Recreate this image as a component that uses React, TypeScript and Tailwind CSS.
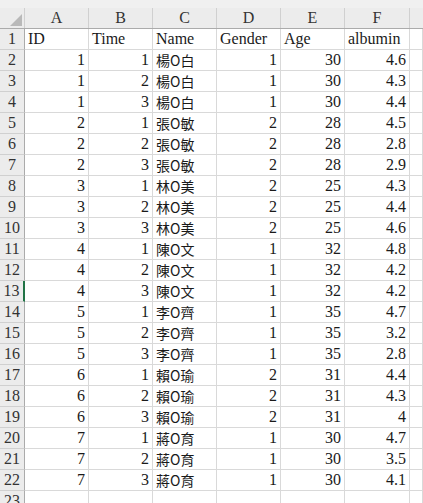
import React from 'react';

type Row = [number, number, string, number, number, number];

const rows: Row[] = [
  [1, 1, '楊O白', 1, 30, 4.6],
  [1, 2, '楊O白', 1, 30, 4.3],
  [1, 3, '楊O白', 1, 30, 4.4],
  [2, 1, '張O敏', 2, 28, 4.5],
  [2, 2, '張O敏', 2, 28, 2.8],
  [2, 3, '張O敏', 2, 28, 2.9],
  [3, 1, '林O美', 2, 25, 4.3],
  [3, 2, '林O美', 2, 25, 4.4],
  [3, 3, '林O美', 2, 25, 4.6],
  [4, 1, '陳O文', 1, 32, 4.8],
  [4, 2, '陳O文', 1, 32, 4.2],
  [4, 3, '陳O文', 1, 32, 4.2],
  [5, 1, '李O齊', 1, 35, 4.7],
  [5, 2, '李O齊', 1, 35, 3.2],
  [5, 3, '李O齊', 1, 35, 2.8],
  [6, 1, '賴O瑜', 2, 31, 4.4],
  [6, 2, '賴O瑜', 2, 31, 4.3],
  [6, 3, '賴O瑜', 2, 31, 4],
  [7, 1, '蔣O育', 1, 30, 4.7],
  [7, 2, '蔣O育', 1, 30, 3.5],
  [7, 3, '蔣O育', 1, 30, 4.1],
];

const cols = ['A', 'B', 'C', 'D', 'E', 'F'];
const grid = 'grid grid-cols-[25px_64px_64px_64px_64px_64px_65px_1fr]';
const serif = "font-['Liberation_Serif','Noto_Sans_CJK_TC',serif]";
const cjk = "font-['Noto_Sans_CJK_TC','Liberation_Sans',sans-serif]";

function RowHead({ n, active }: { n: number | string; active?: boolean }) {
  return (
    <div
      className={`h-[21px] flex items-center justify-center bg-[#ececec] border-b border-[#d0d0d0] border-r ${
        active ? 'border-r-[#217346] border-r-2' : 'border-r-[#ababab]'
      } text-[16px] leading-[20px] text-[#333]`}
    >
      {n}
    </div>
  );
}

function Cell({ children, right, cn }: { children?: React.ReactNode; right?: boolean; cn?: boolean }) {
  return (
    <div
      className={`h-[21px] flex items-center px-[3px] border-r border-b border-[#d9d9d9] bg-white text-[#1a1a1a] leading-[20px] whitespace-nowrap overflow-hidden ${
        right ? 'justify-end' : 'justify-start'
      } ${cn ? cjk + ' text-[14px]' : 'text-[16px]'}`}
    >
      {children}
    </div>
  );
}

export default function App() {
  return (
    <div className={`w-[423px] h-[503px] overflow-hidden bg-white ${serif}`}>
      <div className="h-[8px] bg-[#f0f0f0]" />
      {/* column headers */}
      <div className={`${grid} bg-[#ececec] border-b border-[#ababab]`}>
        <div className="h-[20px] relative border-r border-[#d0d0d0]">
          <div className="absolute right-[2px] bottom-[2px] w-0 h-0 border-l-[12px] border-l-transparent border-b-[12px] border-b-[#b9b9b9]" />
        </div>
        {cols.map((c) => (
          <div key={c} className="h-[20px] flex items-center justify-center border-r border-[#d0d0d0] text-[16px] leading-[20px] text-[#333]">
            {c}
          </div>
        ))}
        <div className="h-[20px]" />
      </div>
      {/* body */}
      <div className={grid}>
        <RowHead n={1} />
        <Cell>ID</Cell>
        <Cell>Time</Cell>
        <Cell>Name</Cell>
        <Cell>Gender</Cell>
        <Cell>Age</Cell>
        <Cell>albumin</Cell>
        <Cell />
        {rows.map((r, i) => (
          <React.Fragment key={i}>
            <RowHead n={i + 2} active={i + 2 === 13} />
            <Cell right>{r[0]}</Cell>
            <Cell right>{r[1]}</Cell>
            <Cell cn>{r[2]}</Cell>
            <Cell right>{r[3]}</Cell>
            <Cell right>{r[4]}</Cell>
            <Cell right>{r[5]}</Cell>
            <Cell />
          </React.Fragment>
        ))}
        <RowHead n={23} />
        <Cell />
        <Cell />
        <Cell />
        <Cell />
        <Cell />
        <Cell />
        <Cell />
      </div>
    </div>
  );
}
